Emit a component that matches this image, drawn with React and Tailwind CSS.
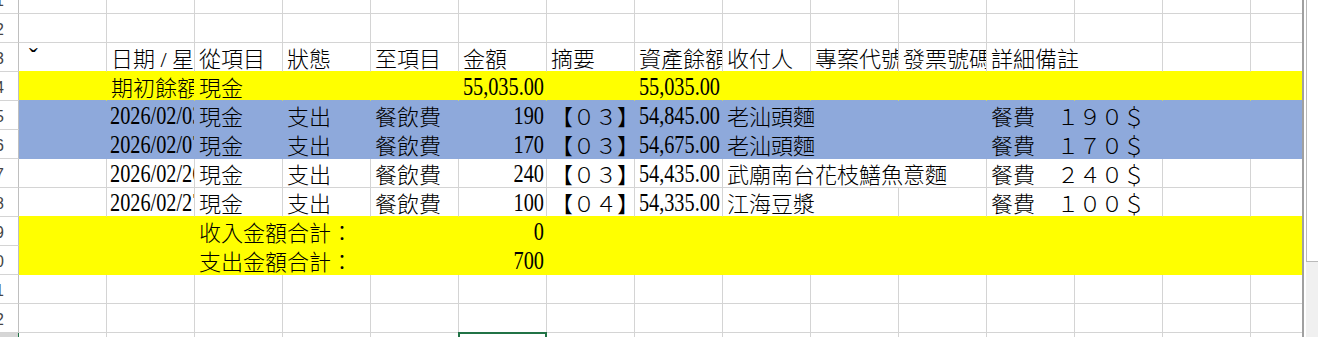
import React from "react";

const T = (c, text, span = 1) => ({ c, span, text, kind: "text" });
const N = (c, text) => ({ c, span: 1, text, kind: "num" });
const D = (c, text) => ({ c, span: 1, text, kind: "date" });

const rows = [
  { n: 1, cells: [] },
  { n: 2, cells: [] },
  {
    n: 3,
    cells: [
      { c: 0, span: 1, text: "ˇ", kind: "caron" },
      T(1, "日期 / 星期"),
      T(2, "從項目"),
      T(3, "狀態"),
      T(4, "至項目"),
      T(5, "金額"),
      T(6, "摘要"),
      T(7, "資產餘額"),
      T(8, "收付人"),
      T(9, "專案代號"),
      T(10, "發票號碼"),
      T(11, "詳細備註", 2),
    ],
  },
  {
    n: 4,
    fill: "y",
    cells: [T(1, "期初餘額"), T(2, "現金"), N(5, "55,035.00"), N(7, "55,035.00")],
  },
  {
    n: 5,
    fill: "b",
    cells: [
      D(1, "2026/02/03"),
      T(2, "現金"),
      T(3, "支出"),
      T(4, "餐飲費"),
      N(5, "190"),
      T(6, "【０３】"),
      N(7, "54,845.00"),
      T(8, "老汕頭麵", 3),
      T(11, "餐費　１９０＄", 3),
    ],
  },
  {
    n: 6,
    fill: "b",
    cells: [
      D(1, "2026/02/07"),
      T(2, "現金"),
      T(3, "支出"),
      T(4, "餐飲費"),
      N(5, "170"),
      T(6, "【０３】"),
      N(7, "54,675.00"),
      T(8, "老汕頭麵", 3),
      T(11, "餐費　１７０＄", 3),
    ],
  },
  {
    n: 7,
    cells: [
      D(1, "2026/02/26"),
      T(2, "現金"),
      T(3, "支出"),
      T(4, "餐飲費"),
      N(5, "240"),
      T(6, "【０３】"),
      N(7, "54,435.00"),
      T(8, "武廟南台花枝鱔魚意麵", 3),
      T(11, "餐費　２４０＄", 2),
    ],
  },
  {
    n: 8,
    cells: [
      D(1, "2026/02/27"),
      T(2, "現金"),
      T(3, "支出"),
      T(4, "餐飲費"),
      N(5, "100"),
      T(6, "【０４】"),
      N(7, "54,335.00"),
      T(8, "江海豆漿", 2),
      T(11, "餐費　１００＄", 2),
    ],
  },
  { n: 9, fill: "y", cells: [T(2, "收入金額合計：", 3), N(5, "0")] },
  { n: 10, fill: "y", cells: [T(2, "支出金額合計：", 3), N(5, "700")] },
  { n: 11, cells: [] },
  { n: 12, cells: [] },
  { n: 13, cells: [], sel: 5 },
];

const widthClass = { 1: "w-[88px]", 2: "w-[176px]", 3: "w-[264px]" };

function bgClass(fill) {
  if (fill === "y") return "bg-[#ffff00]";
  if (fill === "b") return "bg-[#8ea9db]";
  return "bg-white";
}
function bottomClass(fill) {
  if (fill === "y") return "border-b-[#ffff00]";
  if (fill === "b") return "border-b-[#8ea9db]";
  return "border-b-[#d4d4d4]";
}
function rightClass(fill) {
  if (fill === "y") return "border-r-[#ffff00]";
  if (fill === "b") return "border-r-[#8ea9db]";
  return "border-r-[#d4d4d4]";
}

function CellContent({ item }) {
  if (!item) return null;
  if (item.kind === "num") {
    return (
      <span className="block shrink-0 text-[26px] leading-[22px] scale-x-[0.78] origin-right">
        {item.text}
      </span>
    );
  }
  if (item.kind === "date") {
    return (
      <span className="block shrink-0 text-[26px] leading-[22px] scale-x-[0.78] origin-left">
        {item.text}
      </span>
    );
  }
  if (item.kind === "caron") {
    return <span className="block shrink-0 text-[26px] leading-[22px]">{item.text}</span>;
  }
  return <span className="block shrink-0 text-[22px] leading-[22px] font-light">{item.text}</span>;
}

function padClass(item) {
  if (!item) return "";
  if (item.kind === "num") return "pt-[4px] pr-[2px] justify-end";
  if (item.kind === "date") return "pt-[4px] pl-[3px] justify-start";
  if (item.kind === "caron") return "pt-[4px] pl-[10px] justify-start";
  return "pt-[6px] pl-[4px] justify-start";
}

function Row({ row, nextFill }) {
  const fill = row.fill;
  const bottom = nextFill || fill;
  const segs = [];
  let c = 0;
  while (c < 15) {
    const item = row.cells.find((x) => x.c === c);
    const span = item ? item.span : 1;
    segs.push({ c, span, item });
    c += span;
  }
  return (
    <div className="flex h-[29px] shrink-0">
      <div
        className={`w-[19px] h-full shrink-0 border-r border-b border-b-[#d4d4d4] flex justify-end items-center overflow-hidden pr-[14px] ${
          row.sel !== undefined ? "bg-[#d6d6d6] border-r-[#217346]" : "bg-white border-r-[#bfbfbf]"
        }`}
      >
        <span className="block shrink-0 font-['Liberation_Sans',sans-serif] text-[16px] leading-none text-[#444444] pt-[3px]">
          {row.n}
        </span>
      </div>
      {segs.map((s) => {
        const last = s.c === 14;
        const selected = row.sel === s.c;
        const w = last ? "w-[51px]" : widthClass[s.span];
        return (
          <div
            key={s.c}
            className={`relative flex shrink-0 h-full whitespace-nowrap border-b ${w} ${bgClass(fill)} ${bottomClass(
              bottom
            )} ${last ? "" : `border-r ${rightClass(fill)}`} ${selected ? "" : "overflow-hidden"} ${padClass(
              s.item
            )}`}
          >
            <CellContent item={s.item} />
            {selected && (
              <div className="absolute -top-[1px] -left-[1px] w-[89px] h-[40px] border-2 border-[#217346]" />
            )}
          </div>
        );
      })}
    </div>
  );
}

export default function App() {
  return (
    <div className="w-[1318px] h-[337px] overflow-hidden bg-white flex font-['Liberation_Serif','Noto_Sans_CJK_TC',serif] text-black">
      <div className="w-[1302px] h-full shrink-0 overflow-hidden">
        <div className="-mt-[15px] flex flex-col">
          {rows.map((r, i) => (
            <Row key={r.n} row={r} nextFill={rows[i + 1] ? rows[i + 1].fill : undefined} />
          ))}
        </div>
      </div>
      <div className="w-[2px] h-full shrink-0 bg-[#a0a0a0]" />
      <div className="w-[2px] h-full shrink-0 bg-white" />
      <div className="w-[12px] h-full shrink-0 bg-[#f0f0f0] flex flex-col">
        <div className="h-[262px] bg-white border-l border-b border-[#b9b9b9]" />
      </div>
    </div>
  );
}
